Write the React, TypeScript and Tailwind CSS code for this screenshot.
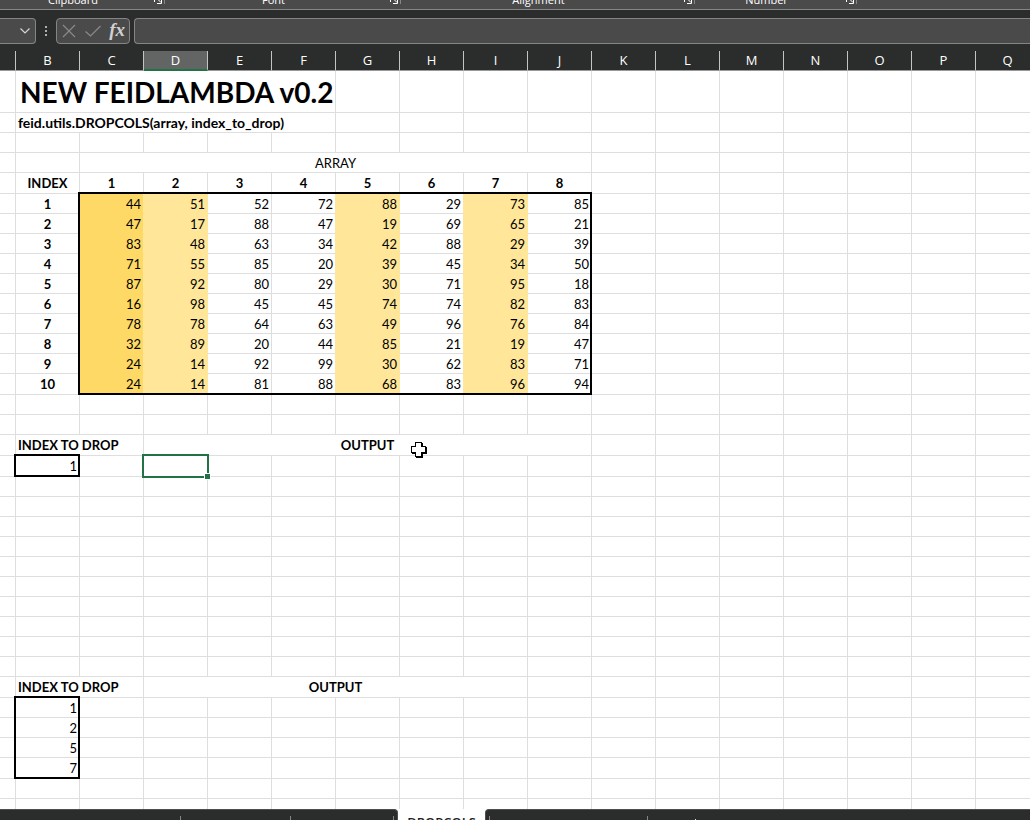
import React from "react";

const COLUMNS = "BCDEFGHIJKLMNOPQ".split("");

const ARRAY_ROWS = [
  [44, 51, 52, 72, 88, 29, 73, 85],
  [47, 17, 88, 47, 19, 69, 65, 21],
  [83, 48, 63, 34, 42, 88, 29, 39],
  [71, 55, 85, 20, 39, 45, 34, 50],
  [87, 92, 80, 29, 30, 71, 95, 18],
  [16, 98, 45, 45, 74, 74, 82, 83],
  [78, 78, 64, 63, 49, 96, 76, 84],
  [32, 89, 20, 44, 85, 21, 19, 47],
  [24, 14, 92, 99, 30, 62, 83, 71],
  [24, 14, 81, 88, 68, 83, 96, 94],
];

const BASE = "relative border-r border-b p-0 align-middle whitespace-nowrap";
const CELL = `${BASE} border-[#dedede]`;

/* Fill and gridline colours for each column of the array. */
const ARRAY_STYLES = [
  "bg-[#ffd966] border-r-[#ffe699] border-b-[#ffd966]",
  "bg-[#ffe699] border-[#ffe699]",
  "border-[#dedede]",
  "border-r-[#ffe699] border-b-[#dedede]",
  "bg-[#ffe699] border-[#ffe699]",
  "border-r-[#ffe699] border-b-[#dedede]",
  "bg-[#ffe699] border-[#ffe699]",
  "border-[#dedede]",
];

function Empty({ count }: { count: number }) {
  return (
    <>
      {Array.from({ length: count }, (_, i) => (
        <td key={i} className={CELL} />
      ))}
    </>
  );
}

function BlankRows({ count }: { count: number }) {
  return (
    <>
      {Array.from({ length: count }, (_, i) => (
        <tr key={i} className="h-5">
          <Empty count={18} />
        </tr>
      ))}
    </>
  );
}

function Launcher({ label }: { label: string }) {
  return (
    <button aria-label={label} className="mb-[3px] h-2 w-2 shrink-0 text-white">
      <svg viewBox="0 0 8 8" className="block h-2 w-2" fill="none" stroke="currentColor">
        <path d="M.5 6V.5H7M3 2.5l4 4M7.5 2v5.500H3" />
      </svg>
    </button>
  );
}

function RibbonGroup({ name, width }: { name: string; width: string }) {
  return (
    <div className={`flex shrink-0 items-end ${width}`}>
      <span className="flex-1 pr-2 text-center text-[11px] leading-[14px]">{name}</span>
      <Launcher label={`${name} settings`} />
      <span className="mb-[3px] ml-0.5 h-2 w-px bg-[#858585]" />
    </div>
  );
}

/* Thick outline around a range, anchored in the range's first cell. */
function RangeOutline({ size }: { size: string }) {
  return <div className={`pointer-events-none absolute -top-0.5 -left-0.5 z-10 border-2 border-black ${size}`} />;
}

function SelectionBox() {
  return (
    <div className="pointer-events-none absolute -inset-0.5 z-20 border-2 border-[#217346]">
      <span className="absolute -right-[3px] -bottom-[3px] h-[5px] w-[5px] bg-[#217346] shadow-[0_0_0_1px_#fff]" />
    </div>
  );
}

function CrossCursor() {
  return (
    <svg viewBox="0 0 16 16" className="absolute top-[7px] left-[267px] z-10 h-4 w-4" shapeRendering="crispEdges" aria-hidden="true">
      <path d="M4 0h7v4h4v7h-4v4H4v-4H0V4h4z" fill="#000" />
      <path d="M5 1h7v4h4v7h-4v4H5v-4H1V5h4z" fill="#000" />
      <path d="M5 1h5v4h4v5h-4v4H5v-4H1V5h4z" fill="#fff" />
    </svg>
  );
}

function Sheet() {
  return (
    <table className="w-full table-fixed border-separate border-spacing-0 text-[13px] leading-[18px] text-black">
      <colgroup>
        <col className="w-4" />
        {COLUMNS.map((c) => (
          <col key={c} className="w-16" />
        ))}
        <col />
      </colgroup>
      <thead>
        <tr className="h-5 bg-[#2b2d2c] font-['Open_Sans',sans-serif] text-white">
          <th className="border-r border-b border-r-[#c4c4c4] border-b-[#969998] p-0" />
          {COLUMNS.map((c) => (
            <th
              key={c}
              scope="col"
              className={`border-r border-r-[#c4c4c4] p-0 align-top font-normal ${
                c === "D" ? "border-b-2 border-b-[#217346] bg-[#636564]" : "border-b border-b-[#969998]"
              }`}
            >
              {c}
            </th>
          ))}
          <th className="border-b border-b-[#969998] p-0" />
        </tr>
      </thead>
      <tbody>
        <tr className="h-[42px]">
          <td className={CELL} />
          <td colSpan={5} className={`${CELL} pl-1 text-[28px] leading-10 font-bold`}>
            NEW FEIDLAMBDA v0.2
          </td>
          <Empty count={12} />
        </tr>
        <tr className="h-5">
          <td className={CELL} />
          <td colSpan={5} className={`${CELL} pl-0.5 text-[14px] font-bold`}>
            feid.utils.DROPCOLS(array, index_to_drop)
          </td>
          <Empty count={12} />
        </tr>
        <BlankRows count={1} />
        <tr className="h-5">
          <Empty count={2} />
          <td colSpan={8} className={`${CELL} text-center`}>ARRAY</td>
          <Empty count={8} />
        </tr>
        <tr className="h-[21px]">
          <td className={CELL} />
          <th className={CELL}>INDEX</th>
          {ARRAY_STYLES.map((_, i) => (
            <th key={i} scope="col" className={CELL}>
              {i + 1}
            </th>
          ))}
          <Empty count={8} />
        </tr>
        {ARRAY_ROWS.map((row, r) => (
          <tr key={r} className={r === ARRAY_ROWS.length - 1 ? "h-[21px]" : "h-5"}>
            <td className={CELL} />
            <th scope="row" className={CELL}>
              {r + 1}
            </th>
            {row.map((value, c) => (
              <td key={c} className={`${BASE} pr-0.5 text-right ${ARRAY_STYLES[c]}`}>
                {value}
                {r === 0 && c === 0 && <RangeOutline size="h-[203px] w-[514px]" />}
              </td>
            ))}
            <Empty count={8} />
          </tr>
        ))}
        <BlankRows count={2} />
        <tr className="h-[21px]">
          <td className={CELL} />
          <th colSpan={2} className={`${CELL} pl-0.5 text-left`}>INDEX TO DROP</th>
          <th colSpan={7} className={CELL}>
            OUTPUT
            <CrossCursor />
          </th>
          <Empty count={8} />
        </tr>
        <tr className="h-[21px]">
          <td className={CELL} />
          <td className={`${CELL} pr-0.5 text-right`}>
            1
            <RangeOutline size="h-[23px] w-[66px]" />
          </td>
          <td className={CELL} />
          <td className={CELL}>
            <SelectionBox />
          </td>
          <Empty count={14} />
        </tr>
        <BlankRows count={10} />
        <tr className="h-[21px]">
          <td className={CELL} />
          <th colSpan={2} className={`${CELL} pl-0.5 text-left`}>INDEX TO DROP</th>
          <th colSpan={6} className={CELL}>OUTPUT</th>
          <Empty count={9} />
        </tr>
        {[1, 2, 5, 7].map((value, i) => (
          <tr key={value} className={i === 3 ? "h-[21px]" : "h-5"}>
            <td className={CELL} />
            <td className={`${CELL} pr-0.5 text-right`}>
              {value}
              {i === 0 && <RangeOutline size="h-[83px] w-[66px]" />}
            </td>
            <Empty count={16} />
          </tr>
        ))}
        <BlankRows count={2} />
      </tbody>
    </table>
  );
}

export default function App() {
  return (
    <div className="flex h-screen flex-col overflow-hidden bg-white font-[Lato,'Liberation_Sans',sans-serif]">
      <header className="shrink-0 bg-[#2b2d2c] pb-[7px] font-['Open_Sans',sans-serif] text-white">
        <div className="flex h-2.5 items-end overflow-hidden border-b border-[#858585] bg-[#4a4a4a] pb-0.5">
          <RibbonGroup name="Clipboard" width="w-[165px]" />
          <RibbonGroup name="Font" width="w-[236px]" />
          <RibbonGroup name="Alignment" width="w-[294px]" />
          <RibbonGroup name="Number" width="w-[162px]" />
        </div>
        <div className="mt-2 flex h-[26px] items-stretch">
          <button aria-label="Name box list" className="flex w-9 items-center justify-end rounded-r-[4px] border border-l-0 border-[#858585] bg-[#4a4a4a] pr-1">
            <svg viewBox="0 0 12 12" className="h-3 w-3" fill="none" stroke="#d6d6d6" strokeWidth="1.2">
              <path d="M1.500 3.500 6 8l4.500-4.500" />
            </svg>
          </button>
          <div className="flex w-5 flex-col items-center justify-center gap-0.5">
            <span className="h-0.5 w-0.5 bg-[#b0b0b0]" />
            <span className="h-0.5 w-0.5 bg-[#b0b0b0]" />
            <span className="h-0.5 w-0.5 bg-[#b0b0b0]" />
          </div>
          <div className="flex w-[74px] items-center justify-between rounded-[4px] border border-[#858585] bg-[#4a4a4a] px-1">
            <button aria-label="Cancel">
              <svg viewBox="0 0 16 16" className="h-4 w-4" fill="none" stroke="#8a8a8a" strokeWidth="1.200">
                <path d="M2 2l12 12M14 2 2 14" />
              </svg>
            </button>
            <button aria-label="Enter">
              <svg viewBox="0 0 18 16" className="h-4 w-[18px]" fill="none" stroke="#8a8a8a" strokeWidth="1.200">
                <path d="M1.500 8.500 6.500 13 16.500 3" />
              </svg>
            </button>
            <button aria-label="Insert function" className="pb-0.5 font-['Liberation_Serif',serif] text-[19px] leading-5 font-bold text-[#d0d0d0] italic">
              fx
            </button>
          </div>
          <input
            aria-label="Formula"
            className="ml-1 min-w-0 flex-1 rounded-l-[4px] border border-r-0 border-[#858585] bg-[#4a4a4a] px-2 text-[13px] outline-none"
          />
        </div>
      </header>

      <main className="min-h-0 flex-1 overflow-hidden">
        <Sheet />
      </main>

      <footer className="flex h-[11px] shrink-0 overflow-hidden font-['Open_Sans',sans-serif]">
        <div className="flex w-[398px] items-start rounded-tr-[4px] border-t border-r border-[#4d4f4e] bg-[#2b2d2c] pt-1.5">
          <span className="h-5 w-[181px] border-r border-[#858585]" />
          <span className="h-5 w-[110px] border-r border-[#858585]" />
          <span className="h-5 w-[103px] border-r border-[#858585]" />
        </div>
        <button className="flex w-[87px] items-start justify-center bg-white pt-1 text-[13px] leading-[18px] font-semibold text-[#222]">
          DROPCOLS
        </button>
        <div className="flex flex-1 items-start rounded-tl-[4px] border-t border-l border-[#4d4f4e] bg-[#2b2d2c] pt-1.5">
          <span className="h-5 w-1 border-r border-[#858585]" />
          <span className="h-5 w-[158px] border-r border-[#858585]" />
          <button aria-label="New sheet" className="mt-[3px] ml-10 h-[15px] w-[15px] shrink-0">
            <svg viewBox="0 0 15 15" className="block h-[15px] w-[15px]" stroke="#e0e0e0">
              <path d="M7.500 0v15M0 7.500h15" />
            </svg>
          </button>
        </div>
      </footer>
    </div>
  );
}
